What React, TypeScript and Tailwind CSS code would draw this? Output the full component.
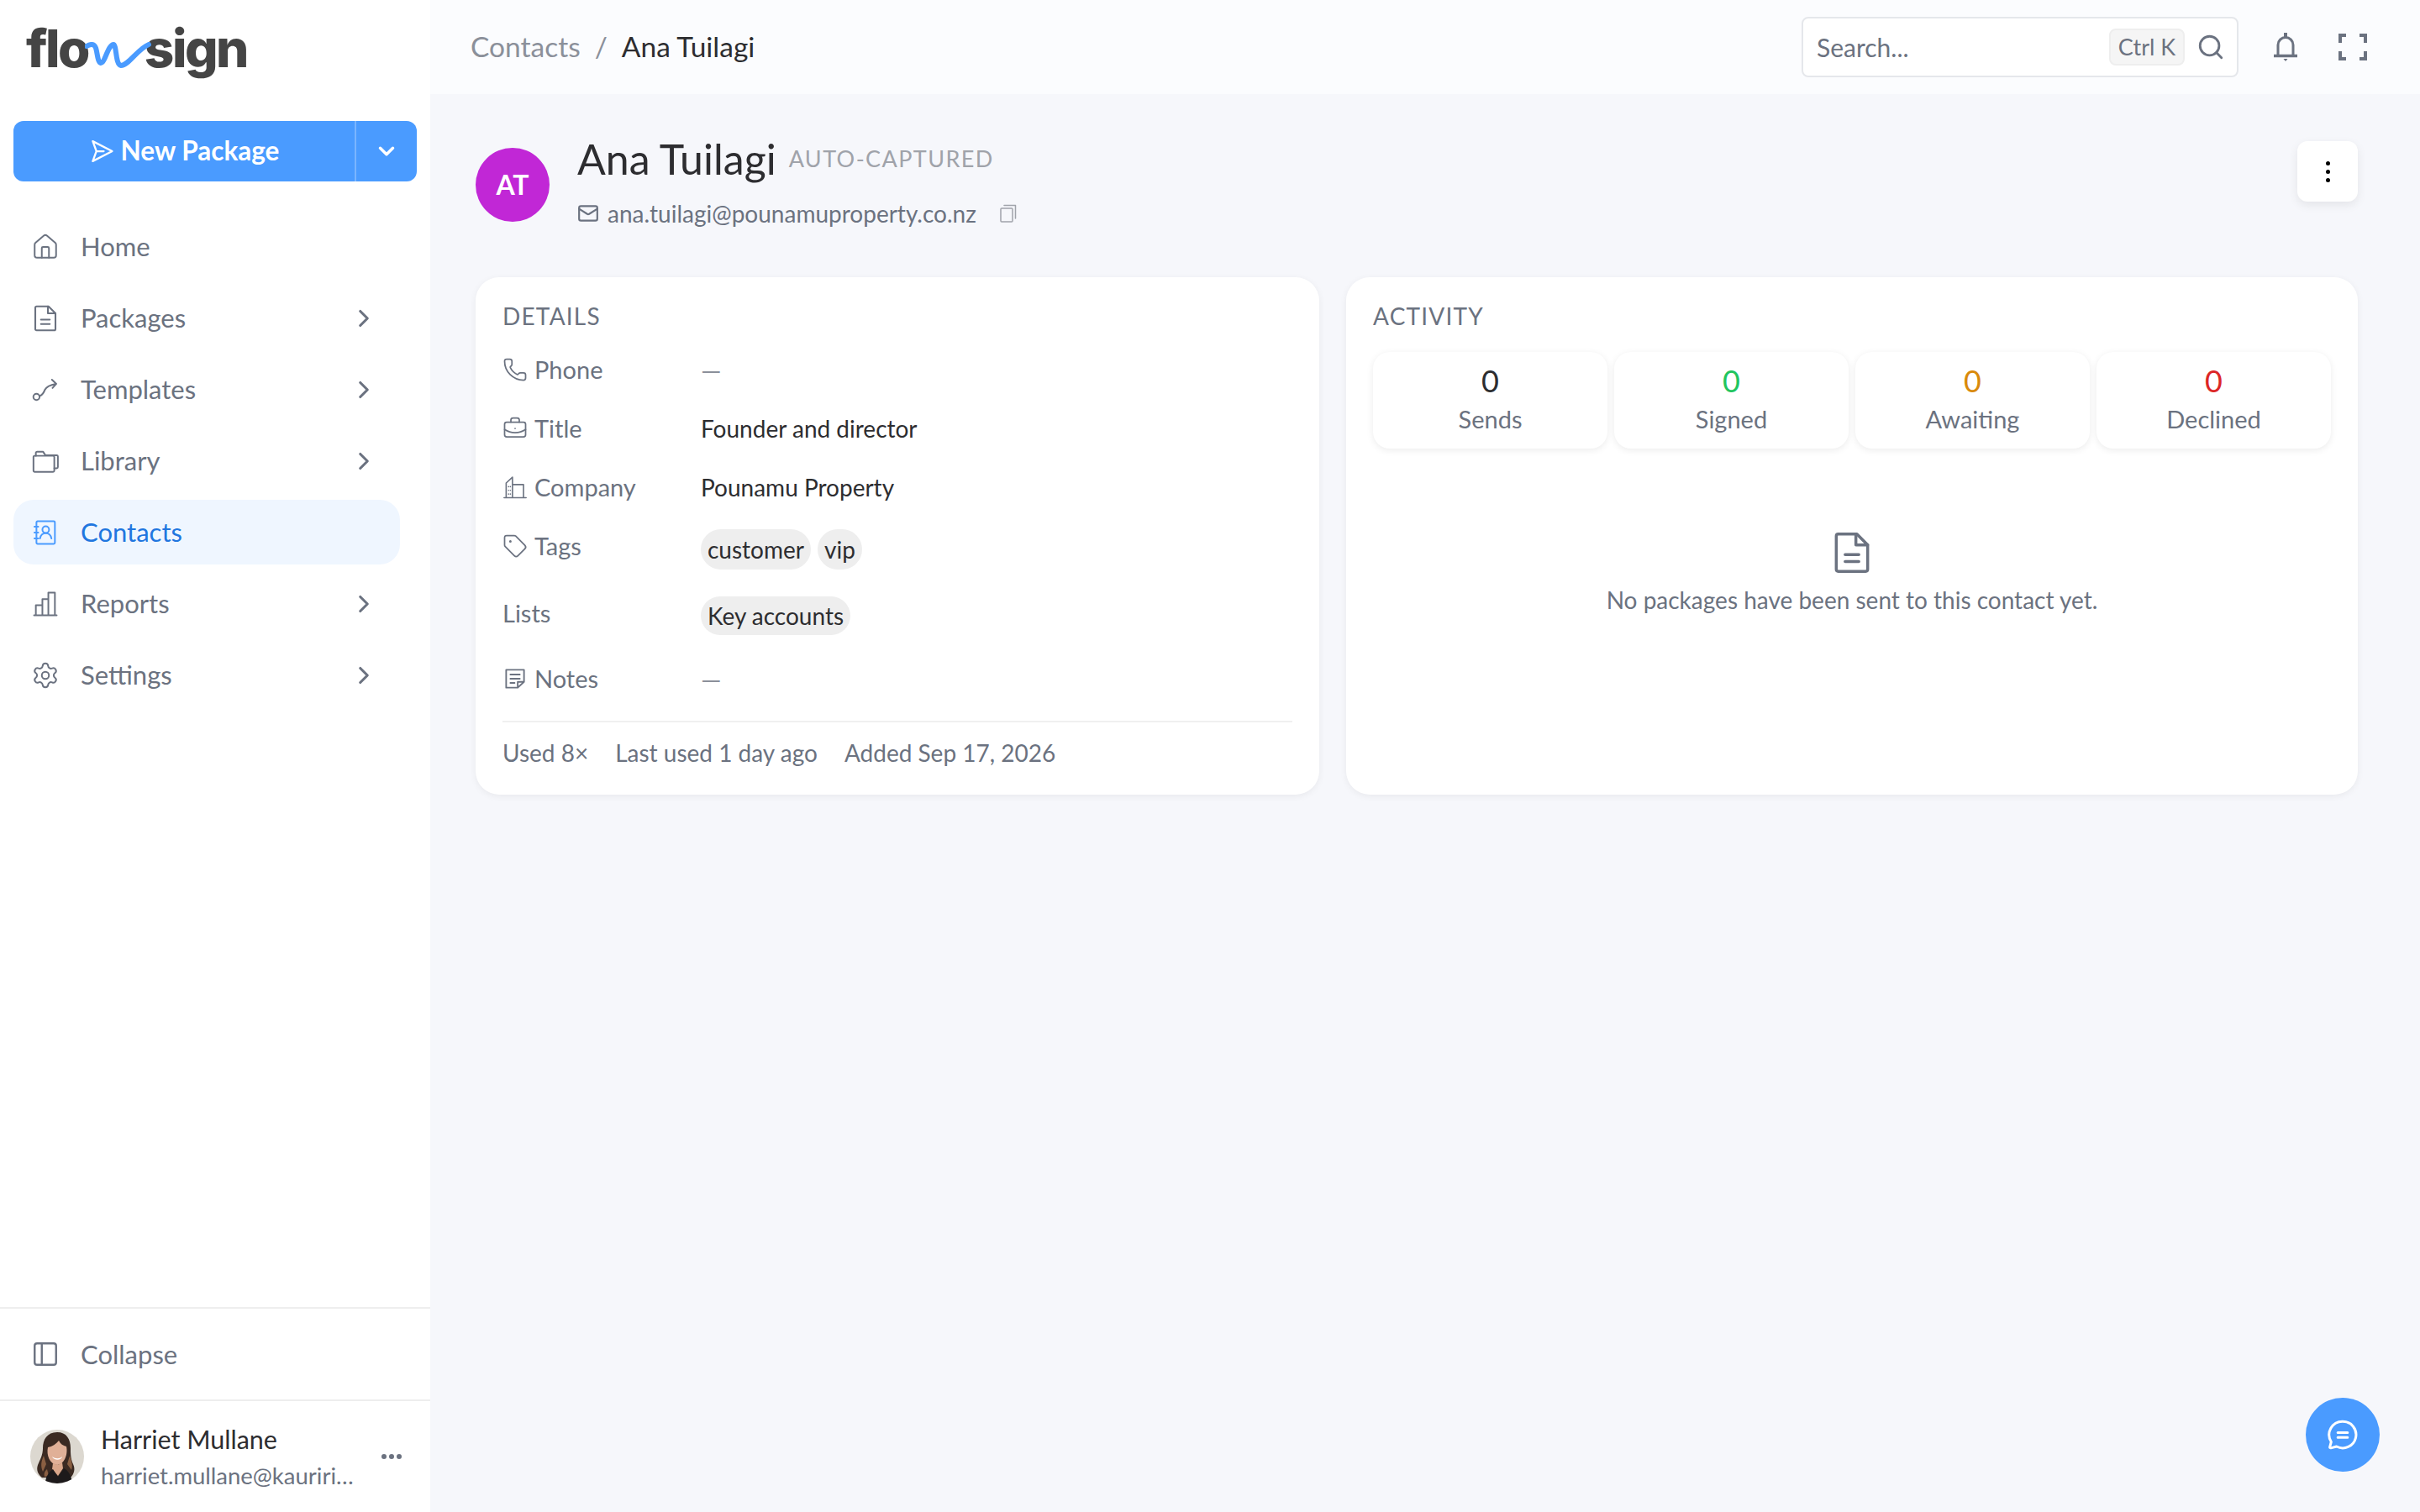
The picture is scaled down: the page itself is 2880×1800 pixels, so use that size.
import { ReactNode } from "react";
import { Settings, Tag, Search, BriefcaseBusiness, Phone, ChevronRight, ChevronDown, Mail, PanelLeft, Home as HomeIcon } from "lucide-react";

type IconProps = { className?: string };

// stroke wrapper for the hand drawn icons
function Ico({ className, children, w = 1.6 }: IconProps & { children: ReactNode; w?: number }) {
  return (
    <svg viewBox="0 0 24 24" fill="none" stroke="currentColor" strokeWidth={w} strokeLinecap="round" strokeLinejoin="round" className={className}>
      {children}
    </svg>
  );
}

const DocIcon = ({ className, w }: IconProps & { w?: number }) => (
  <Ico className={className} w={w}>
    <path d="M4 3.500a1 1 0 0 1 1-1h9.500L20 8v12.500a1 1 0 0 1-1 1H5a1 1 0 0 1-1-1z" />
    <path d="M14 2.500V8h6M8.500 13h7M8.500 16.500h7" />
  </Ico>
);
const RouteIcon = ({ className }: IconProps) => (
  <Ico className={className} w={1.4}>
    <circle cx="4.500" cy="18" r="2.600" />
    <path d="M7 17.200c3-.6 3.600-3 4.600-5.200 1-2.200 3-3.800 9.400-5M17.500 3.500 21.200 7l-3.200 3.500" />
  </Ico>
);
const FoldersIcon = ({ className }: IconProps) => (
  <Ico className={className} w={1.4}>
    <path d="M2 8.500A1 1 0 0 1 3 7.500h15.500a1 1 0 0 1 1 1V20a1 1 0 0 1-1 1H3a1 1 0 0 1-1-1z" />
    <path d="M4 7.500V5a1 1 0 0 1 1-1h5l2 3h9.500a1 1 0 0 1 1 1v9a1 1 0 0 1-1 1h-2" />
  </Ico>
);
const ContactBookIcon = ({ className }: IconProps) => (
  <Ico className={className} w={1.4}>
    <rect x="4.500" y="2.500" width="15.500" height="19" rx="1" />
    <circle cx="12.300" cy="9.500" r="2.800" />
    <path d="M7.500 17c.6-3 2.500-4.400 4.800-4.400s4.200 1.400 4.800 4.400M2.800 7h3.200M2.800 12h3.200M2.800 17h3.200" />
  </Ico>
);
const BarsIcon = ({ className }: IconProps) => (
  <Ico className={className} w={1.4}>
    <path d="M2.500 21.500h19M4 21.500V13h5.500v8.500M9.500 13V8h5v13.500M14.500 8V2.500h5.500v19" />
  </Ico>
);
const BuildingIcon = ({ className }: IconProps) => (
  <Ico className={className} w={1.3}>
    <path d="M1.500 22h21M3.500 22V8l6-5.500V22M9.500 9.500H20V22M5.800 11.500h.01M5.800 15h.01M5.800 18.500h.01M7.500 11.500h.01M7.500 15h.01M7.500 18.500h.01" />
  </Ico>
);
const NoteIcon = ({ className }: IconProps) => (
  <Ico className={className} w={1.5}>
    <path d="M3.500 3.500h17V15l-6 5.500h-11zM20.500 15h-6v5.500M7.500 8h9M7.500 12h9M7.500 16h4" />
  </Ico>
);
const CopyIcon = ({ className }: IconProps) => (
  <Ico className={className} w={1.5}>
    <rect x="3" y="6" width="14" height="16" rx="1" />
    <path d="M7 2.500h13.500V18" />
  </Ico>
);
const SendIcon = ({ className }: IconProps) => (
  <Ico className={className} w={1.8}>
    <path d="M3.500 2.500 22 12 3.500 21.500 7 12zM7 12h7" />
  </Ico>
);
const ChatIcon = ({ className }: IconProps) => (
  <Ico className={className} w={1.8}>
    <path d="M12 2.500a9.500 9.500 0 1 1-4.400 17.900L3.500 21.500c-.4.100-.8-.3-.7-.7l1-3.700A9.500 9.500 0 0 1 12 2.500z" />
    <path d="M8.500 10.500h7M8.500 14h7" />
  </Ico>
);
const BellIcon = ({ className }: IconProps) => (
  <svg viewBox="0 0 30 36" className={className} fill="none" stroke="currentColor" strokeWidth="3">
    <path d="M6 28V15.500a9 9 0 0 1 18 0V28" />
    <path d="M1 28.500h28" strokeWidth="3.500" />
    <path d="M15 1v5" strokeWidth="4" />
    <path d="M12.500 32h5l-2.500 3z" fill="currentColor" stroke="none" />
  </svg>
);
const CornersIcon = ({ className }: IconProps) => (
  <svg viewBox="0 0 34 32" className={className} fill="none" stroke="currentColor" strokeWidth="4">
    <path d="M2 11V2h7M25 2h7v9M2 21v9h7M25 30h7v-9" />
  </svg>
);

function Portrait() {
  return (
    <svg viewBox="0 0 64 64" className="h-[64px] w-[64px] shrink-0 rounded-full bg-[#dcd8d0]">
      <path d="M32 3C20 3 15 12 15 22c0 8-3 13-6 20-2 6 0 11 5 15h34c4-4 6-10 3-16-3-7-3-12-3-19C48 11 43 3 32 3z" fill="#3b2a22" />
      <path d="M15 50c-3-7-2-12 1-19l3 10zM17 56c-1-4 0-6 3-9l2 8zM49 48c2-6 0-11-2-17l-3 10z" fill="#8a5f42" />
      <path d="M21 21c5-1 10-4 13-8 2 4 5 6 9 7 2 9-2 21-11 22-9-1-13-12-11-21z" fill="#e0b097" />
      <path d="M26 32c4 3 9 3 12 0-1 5-10 5-12 0z" fill="#fff" />
      <path d="M27 40l-1 7 7 8 6-9-1-7-5 3z" fill="#d9a68a" />
      <path d="M18 64c0-8 4-13 9-17l6 9 7-10c6 3 9 9 10 18z" fill="#1d1a1b" />
    </svg>
  );
}

function NavItem({ icon, label, active, arrow = true }: { icon: ReactNode; label: string; active?: boolean; arrow?: boolean }) {
  return (
    <div className={`flex h-[77px] items-center rounded-[24px] pl-[21px] pr-[26px] ${active ? "bg-[#eff6ff] text-[#2176df]" : "text-[#6b7280]"}`}>
      <span className={`flex w-[59px] shrink-0 ${active ? "text-[#4a9bff]" : ""}`}>{icon}</span>
      <span className="flex-1 text-[31px]">{label}</span>
      {arrow && !active && <ChevronRight className="h-[34px] w-[34px]" strokeWidth={2.2} />}
    </div>
  );
}

function Sidebar() {
  const ic = "h-[34px] w-[34px]";
  return (
    <aside className="flex h-full w-[512px] shrink-0 flex-col bg-white">
      <div className="flex h-[144px] shrink-0 items-start pl-[31px] pt-[18px] text-[#454545] [font-family:Inter,sans-serif] text-[62px] font-extrabold leading-[80px] tracking-[-2.500px]">
        <span>flo</span>
        <svg viewBox="0 0 80 40" className="z-10 -ml-[4px] -mr-[9px] mt-[32px] h-[40px] w-[80px]" fill="none" stroke="#4a9bff" strokeWidth="6" strokeLinecap="round">
          <path d="M2 5c5-3 9-3 11 2 2 6 2 17 6 18 5 0 8-21 15-22 4 0 2 24 9 25 9 0 20-20 33-25" />
        </svg>
        <span>sign</span>
      </div>
      <div className="mx-[16px] flex h-[72px] shrink-0 items-stretch rounded-[12px] bg-[#4a9bff] text-white">
        <div className="flex flex-1 items-center justify-center gap-[8px] border-r-2 border-[#7ab5ff] text-[31.500px] font-bold">
          <SendIcon className="h-[30px] w-[30px]" />
          New Package
        </div>
        <div className="flex w-[72px] items-center justify-center">
          <ChevronDown className="h-[30px] w-[30px]" strokeWidth={2.8} />
        </div>
      </div>
      <nav className="mt-[39px] flex flex-col gap-[8px] pl-[16px] pr-[36px]">
        <NavItem icon={<HomeIcon className={ic} strokeWidth={1.4} />} label="Home" arrow={false} />
        <NavItem icon={<DocIcon className="-ml-[1px] h-[36px] w-[36px]" w={1.4} />} label="Packages" />
        <NavItem icon={<RouteIcon className={ic} />} label="Templates" />
        <NavItem icon={<FoldersIcon className={ic} />} label="Library" />
        <NavItem icon={<ContactBookIcon className={ic} />} label="Contacts" active />
        <NavItem icon={<BarsIcon className={ic} />} label="Reports" />
        <NavItem icon={<Settings className={ic} strokeWidth={1.4} />} label="Settings" />
      </nav>
      <div className="mt-auto flex h-[110px] items-center border-t-2 border-[#eeeeee] pl-[37px] text-[31px] text-[#6b7280]">
        <PanelLeft className="mr-[25px] h-[34px] w-[34px]" strokeWidth={1.7} />
        Collapse
      </div>
      <div className="flex h-[134px] items-center border-t-2 border-[#eeeeee] pl-[36px] pr-[34px]">
        <Portrait />
        <div className="ml-[20px] -mt-[2px] min-w-0 flex-1">
          <div className="text-[30.500px] leading-[42px] text-[#2d2d30]">Harriet Mullane</div>
          <div className="mt-[5px] w-[304px] truncate text-[27.500px] leading-[36px] text-[#6b7280]">harriet.mullane@kauriri.co.nz</div>
        </div>
        <div className="flex gap-[3px]">
          <i className="h-[6px] w-[6px] rounded-full bg-[#6b7280]" />
          <i className="h-[6px] w-[6px] rounded-full bg-[#6b7280]" />
          <i className="h-[6px] w-[6px] rounded-full bg-[#6b7280]" />
        </div>
      </div>
    </aside>
  );
}

function TopBar() {
  return (
    <header className="flex h-[112px] shrink-0 items-center bg-[#fbfcfe] pl-[48px] pr-[63px]">
      <div className="-mt-[2px] flex items-center">
        <span className="text-[33.500px] text-[#8b909a]">Contacts</span>
        <span className="mx-[17px] text-[33.500px] text-[#8b909a]">/</span>
        <span className="text-[33.500px] text-[#2d2d30]">Ana Tuilagi</span>
      </div>
      <div className="ml-auto flex h-[72px] w-[520px] items-center rounded-[8px] border-2 border-[#e5e7eb] bg-white pl-[16px] pr-[14px]">
        <span className="flex-1 text-[30px] text-[#6b7280]">Search...</span>
        <span className="flex h-[44px] w-[90px] items-center justify-center rounded-[8px] border-2 border-[#eeeeee] bg-[#f5f5f5] text-[27px] text-[#6b7280]">Ctrl K</span>
        <Search className="ml-[14px] h-[34px] w-[34px] text-[#6b7280]" strokeWidth={2} />
      </div>
      <BellIcon className="ml-[41px] h-[36px] w-[30px] text-[#6b7280]" />
      <CornersIcon className="ml-[48px] h-[32px] w-[34px] text-[#6b7280]" />
    </header>
  );
}

function Row({ h, icon, label, children }: { h: string; icon?: ReactNode; label: string; children?: ReactNode }) {
  return (
    <div className={`flex items-start pt-[13px] ${h}`}>
      <div className="flex h-[42px] w-[236px] shrink-0 items-center gap-[8px] text-[29px] text-[#6b7280]">
        {icon}
        {label}
      </div>
      {children}
    </div>
  );
}

const Dash = () => <span className="text-[31px] leading-[42px] text-[#8b909a]">—</span>;
const Val = ({ children }: { children: ReactNode }) => <span className="text-[28px] leading-[42px] text-[#2d2d30]">{children}</span>;
const Chip = ({ children, h }: { children: ReactNode; h: string }) => (
  <span className={`mt-[1px] flex items-center rounded-full bg-[#eeeeee] px-[8px] text-[28px] text-[#2d2d30] ${h}`}>{children}</span>
);

function DetailsCard() {
  const ic = "h-[30px] w-[30px] shrink-0";
  return (
    <section className="rounded-[28px] bg-white px-[32px] pb-[32px] pt-[28px] shadow-[0_2px_8px_rgba(0,0,0,0.06)]">
      <h2 className="text-[28px] leading-[36px] tracking-[1.200px] text-[#6b7280]">DETAILS</h2>
      <div className="mt-[12px]">
        <Row h="h-[70px]" icon={<Phone className={ic} strokeWidth={1.4} />} label="Phone"><Dash /></Row>
        <Row h="h-[70px]" icon={<BriefcaseBusiness className={ic} strokeWidth={1.4} />} label="Title"><Val>Founder and director</Val></Row>
        <Row h="h-[70px]" icon={<BuildingIcon className={ic} />} label="Company"><Val>Pounamu Property</Val></Row>
        <Row h="h-[80px]" icon={<Tag className={ic} strokeWidth={1.4} />} label="Tags">
          <div className="flex gap-[8px]">
            <Chip h="h-[48px]">customer</Chip>
            <Chip h="h-[48px]">vip</Chip>
          </div>
        </Row>
        <Row h="h-[78px]" label="Lists"><Chip h="h-[46px]">Key accounts</Chip></Row>
        <Row h="h-[70px]" icon={<NoteIcon className={ic} />} label="Notes"><Dash /></Row>
      </div>
      <div className="mt-[14px] flex gap-[32px] border-t-2 border-[#f0f0f0] pt-[18px] text-[28px] leading-[36px] text-[#6b7280]">
        <span>Used 8×</span>
        <span>Last used 1 day ago</span>
        <span>Added Sep 17, 2026</span>
      </div>
    </section>
  );
}

function Stat({ n, label, color }: { n: string; label: string; color: string }) {
  return (
    <div className="flex h-[115px] flex-1 flex-col items-center rounded-[20px] bg-white pt-[14px] shadow-[0_2px_8px_rgba(0,0,0,0.08)]">
      <span className={`text-[36px] leading-[40px] ${color}`}>{n}</span>
      <span className="mt-[8px] text-[29px] leading-[36px] text-[#6b7280]">{label}</span>
    </div>
  );
}

function ActivityCard() {
  return (
    <section className="rounded-[28px] bg-white px-[32px] pt-[28px] shadow-[0_2px_8px_rgba(0,0,0,0.06)]">
      <h2 className="text-[28px] leading-[36px] tracking-[1.200px] text-[#6b7280]">ACTIVITY</h2>
      <div className="mt-[25px] flex gap-[8px]">
        <Stat n="0" label="Sends" color="text-[#2d2d30]" />
        <Stat n="0" label="Signed" color="text-[#22c55e]" />
        <Stat n="0" label="Awaiting" color="text-[#d98a0b]" />
        <Stat n="0" label="Declined" color="text-[#dc2626]" />
      </div>
      <div className="mt-[96px] flex flex-col items-center">
        <DocIcon className="h-[56px] w-[56px] text-[#6b7280]" w={1.5} />
        <p className="mt-[10px] text-[28px] leading-[36px] text-[#6b7280]">No packages have been sent to this contact yet.</p>
      </div>
    </section>
  );
}

export default function App() {
  return (
    <div className="relative flex h-[1800px] w-[2880px] overflow-hidden bg-[#f6f7fb] [font-family:Lato,sans-serif]">
      <Sidebar />
      <main className="flex min-w-0 flex-1 flex-col">
        <TopBar />
        <div className="pl-[54px] pr-[74px] pt-[52px]">
          <div className="flex h-[166px] items-start">
            <div className="mt-[12px] flex h-[88px] w-[88px] items-center justify-center rounded-full bg-[#c127d6] text-[32px] font-bold text-white">AT</div>
            <div className="ml-[33px]">
              <div className="flex h-[50px] items-center">
                <span className="text-[50px] text-[#2d2d30]">Ana Tuilagi</span>
                <span className="ml-[15px] text-[27px] tracking-[1.400px] text-[#a0a3aa]">AUTO-CAPTURED</span>
              </div>
              <div className="mt-[22px] flex h-[36px] items-center text-[28px] text-[#6b7280]">
                <Mail className="mr-[10px] h-[26px] w-[26px]" strokeWidth={2} />
                ana.tuilagi@pounamuproperty.co.nz
                <CopyIcon className="ml-[26px] h-[24px] w-[24px] text-[#a0a3aa]" />
              </div>
            </div>
            <div className="ml-auto mt-[4px] flex h-[72px] w-[72px] items-center justify-center rounded-[12px] bg-white shadow-[0_4px_12px_rgba(0,0,0,0.08)]">
              <span className="flex flex-col gap-[5px]">
                <i className="h-[5px] w-[5px] rounded-full bg-black" />
                <i className="h-[5px] w-[5px] rounded-full bg-black" />
                <i className="h-[5px] w-[5px] rounded-full bg-black" />
              </span>
            </div>
          </div>
          <div className="grid grid-cols-[1004px_1204px] gap-x-[32px]">
            <DetailsCard />
            <ActivityCard />
          </div>
        </div>
      </main>
      <button className="absolute bottom-[48px] right-[48px] flex h-[88px] w-[88px] items-center justify-center rounded-full bg-[#4a9bff] text-white">
        <ChatIcon className="h-[40px] w-[40px]" />
      </button>
    </div>
  );
}
